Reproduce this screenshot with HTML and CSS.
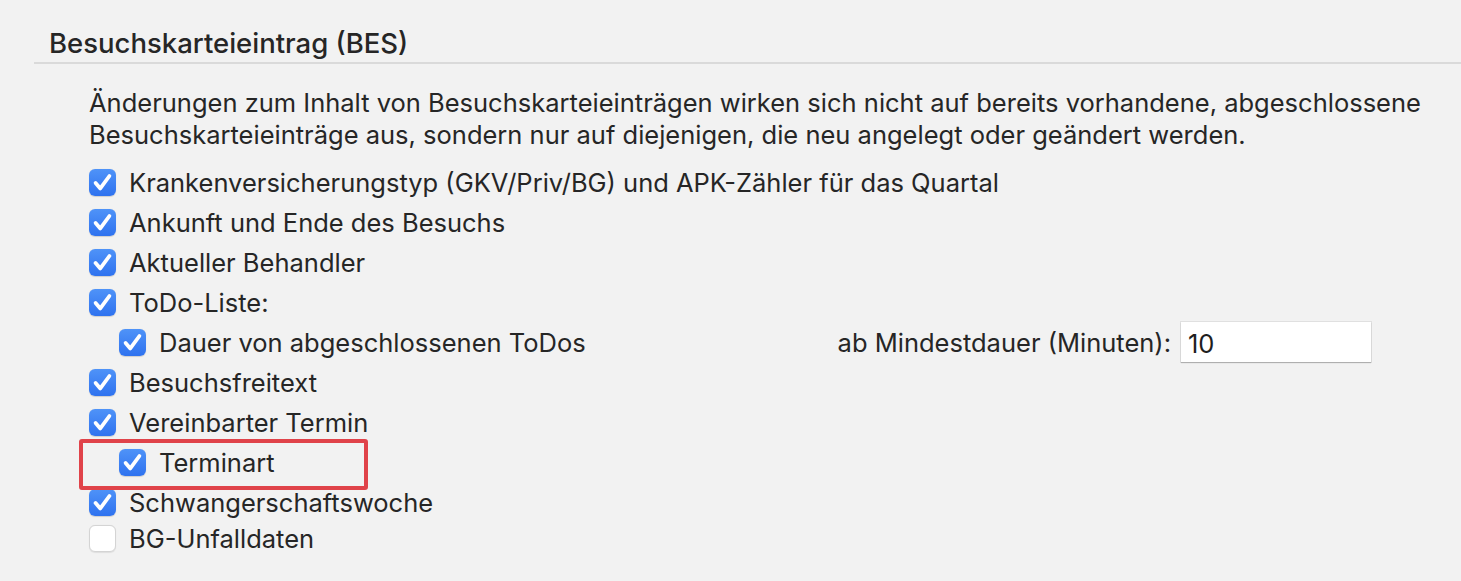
FILE: index.html
```html
<!DOCTYPE html>
<html lang="de">
<head>
<meta charset="utf-8">
<title>Besuchskarteieintrag (BES)</title>
<link rel="stylesheet" href="styles.css">
</head>
<body>
<section class="panel">
  <h2 class="panel-title">Besuchskarteieintrag (BES)</h2>
  <div class="panel-body">
    <p class="note">Änderungen zum Inhalt von Besuchskarteieinträgen wirken sich nicht auf bereits vorhandene, abgeschlossene<br>Besuchskarteieinträge aus, sondern nur auf diejenigen, die neu angelegt oder geändert werden.</p>
    <ul class="options">
      <li class="opt"><span class="cb checked"><svg viewBox="0 0 27 27"><path d="M6.6 14 L11.3 19.4 L20.4 7"/></svg></span><span class="lbl">Krankenversicherungstyp (GKV/Priv/BG) und APK-Zähler für das Quartal</span></li>
      <li class="opt"><span class="cb checked"><svg viewBox="0 0 27 27"><path d="M6.6 14 L11.3 19.4 L20.4 7"/></svg></span><span class="lbl">Ankunft und Ende des Besuchs</span></li>
      <li class="opt"><span class="cb checked"><svg viewBox="0 0 27 27"><path d="M6.6 14 L11.3 19.4 L20.4 7"/></svg></span><span class="lbl">Aktueller Behandler</span></li>
      <li class="opt"><span class="cb checked"><svg viewBox="0 0 27 27"><path d="M6.6 14 L11.3 19.4 L20.4 7"/></svg></span><span class="lbl">ToDo-Liste:</span></li>
      <li class="opt sub"><span class="cb checked"><svg viewBox="0 0 27 27"><path d="M6.6 14 L11.3 19.4 L20.4 7"/></svg></span><span class="lbl">Dauer von abgeschlossenen ToDos</span>
        <span class="extra"><label class="extra-lbl" for="mindest">ab Mindestdauer (Minuten):</label><input id="mindest" class="field" type="text" value="10"></span></li>
      <li class="opt"><span class="cb checked"><svg viewBox="0 0 27 27"><path d="M6.6 14 L11.3 19.4 L20.4 7"/></svg></span><span class="lbl">Besuchsfreitext</span></li>
      <li class="opt"><span class="cb checked"><svg viewBox="0 0 27 27"><path d="M6.6 14 L11.3 19.4 L20.4 7"/></svg></span><span class="lbl">Vereinbarter Termin</span></li>
      <li class="opt sub marked"><span class="cb checked"><svg viewBox="0 0 27 27"><path d="M6.6 14 L11.3 19.4 L20.4 7"/></svg></span><span class="lbl">Terminart</span></li>
      <li class="opt"><span class="cb checked"><svg viewBox="0 0 27 27"><path d="M6.6 14 L11.3 19.4 L20.4 7"/></svg></span><span class="lbl">Schwangerschaftswoche</span></li>
      <li class="opt last"><span class="cb"></span><span class="lbl">BG-Unfalldaten</span></li>
    </ul>
  </div>
</section>
</body>
</html>
```
FILE: styles.css
```css
html, body {
  margin: 0;
  padding: 0;
  background: #f2f2f2;
}
body {
  font-family: "Inter", "Liberation Sans", sans-serif;
  color: #262626;
  width: 1461px;
  height: 581px;
  overflow: hidden;
}
.panel {
  padding-left: 34px;
}
.panel-title {
  margin: 0;
  padding: 27px 0 3px 15px;
  font-size: 27.5px;
  line-height: 32px;
  font-weight: 500;
  border-bottom: 2px solid #dadada;
}
.panel-body {
  padding: 0 90px 0 55px;
}
.note {
  margin: 23px 0 11px 0;
  font-size: 25.5px;
  line-height: 32px;
  white-space: nowrap;
}
.options {
  list-style: none;
  margin: 0;
  padding: 0;
}
.opt {
  display: flex;
  align-items: center;
  height: 40px;
  font-size: 25.5px;
}
.opt.sub {
  padding-left: 30px;
}
.opt.last {
  margin-top: -4px;
}
.opt.marked {
  position: relative;
}
.opt.marked::after {
  content: "";
  position: absolute;
  left: -10px;
  top: -3px;
  width: 289px;
  height: 51px;
  box-sizing: border-box;
  border: 4.5px solid #e0434a;
  border-radius: 3px;
  pointer-events: none;
}
.cb {
  width: 27px;
  height: 27px;
  box-sizing: border-box;
  border-radius: 6px;
  background: #ffffff;
  border: 1px solid #d4d4d4;
  box-shadow: 0 0.5px 1px rgba(0,0,0,0.08);
  flex: 0 0 auto;
  margin-right: 13px;
  display: flex;
}
.cb.checked {
  border: none;
  background: linear-gradient(#4f93f8, #2f72ef);
  box-shadow: 0 0.5px 1px rgba(0,0,0,0.15);
}
.cb svg {
  width: 27px;
  height: 27px;
}
.cb svg path {
  fill: none;
  stroke: #ffffff;
  stroke-width: 3.8;
  stroke-linecap: round;
  stroke-linejoin: round;
}
.lbl {
  white-space: nowrap;
}
.extra {
  margin-left: auto;
  display: flex;
  align-items: center;
  gap: 10px;
}
.extra-lbl {
  white-space: nowrap;
}
.field {
  width: 190px;
  height: 40px;
  box-sizing: border-box;
  border: none;
  background: #ffffff;
  box-shadow: 0 0 0 1px rgba(0,0,0,0.07), 0 1px 1px rgba(0,0,0,0.22);
  font-family: inherit;
  font-size: 25.5px;
  color: #1e1e1e;
  padding: 2px 7px 0 7px;
  outline: none;
}
```
